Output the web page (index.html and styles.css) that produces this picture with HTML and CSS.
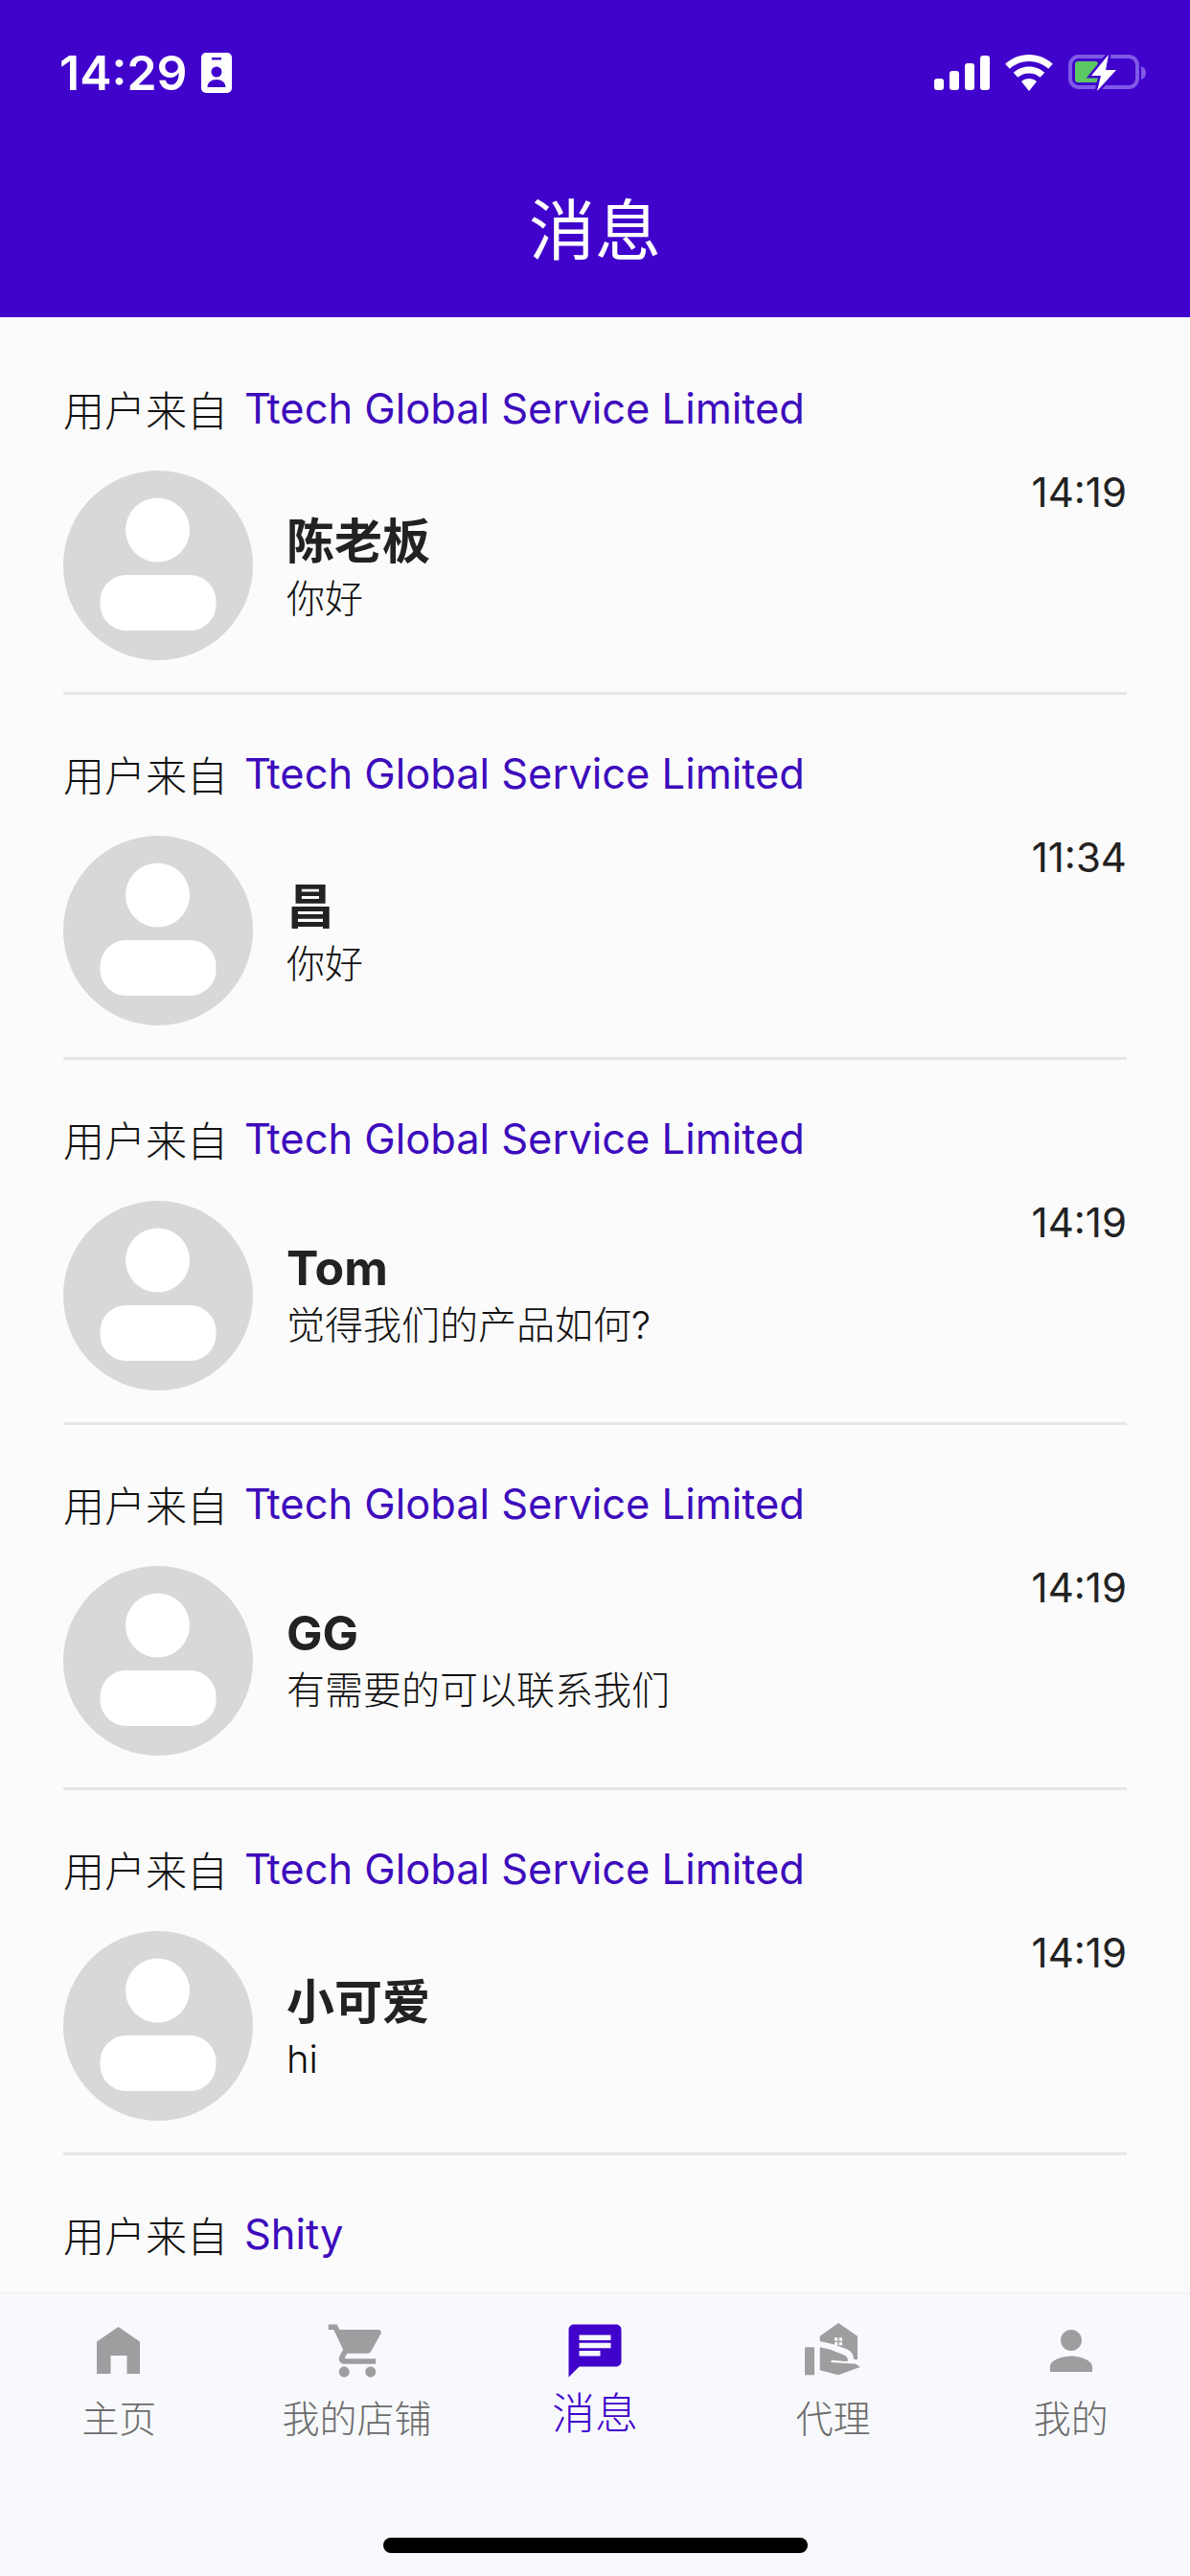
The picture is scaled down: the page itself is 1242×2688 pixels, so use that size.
FILE: index.html
```html
<!DOCTYPE html>
<html lang="zh-CN">
<head>
    <meta charset="UTF-8">
    <meta name="viewport" content="width=device-width, initial-scale=1.0">
    <title>消息</title>
    <link rel="stylesheet" href="styles.css">
</head>
<body>

<div class="app">
    <header class="top-bar">
        <div class="status-bar">
            <div class="status-left">
                <span class="clock">14:29</span>
                <svg class="badge-icon" viewBox="0 0 32 42">
                    <path fill="#fff" fill-rule="evenodd" d="M5 0h22a5 5 0 0 1 5 5v32a5 5 0 0 1-5 5H5a5 5 0 0 1-5-5V5a5 5 0 0 1 5-5zM11 5v2.500h10V5zM16 14.500a5.500 5.500 0 1 0 0 11a5.500 5.500 0 0 0 0-11zM6.500 36h19c0-5-4-8-9.500-8s-9.500 3-9.500 8z"/>
                </svg>
            </div>
            <div class="status-right">
                <svg class="signal-icon" viewBox="0 0 58 36">
                    <rect x="0" y="24" width="10" height="12" rx="3" fill="#fff"/>
                    <rect x="16" y="16" width="10" height="20" rx="3" fill="#fff"/>
                    <rect x="32" y="8" width="10" height="28" rx="3" fill="#fff"/>
                    <rect x="48" y="0" width="10" height="36" rx="3" fill="#fff"/>
                </svg>
                <svg class="wifi-icon" viewBox="0 0 50 38">
                    <path fill="#fff" d="M25 0c9.500 0 18.200 3.700 24.800 9.700l-4.600 5C39.800 9.900 32.800 7 25 7S10.200 9.900 4.800 14.700l-4.600-5C6.800 3.700 15.500 0 25 0z"/>
                    <path fill="#fff" d="M25 12.500c6.300 0 12 2.400 16.300 6.300l-4.700 5C33.500 21 29.400 19.500 25 19.500s-8.500 1.500-11.600 4.300l-4.700-5c4.300-3.900 10-6.300 16.300-6.300z"/>
                    <path fill="#fff" d="M25 25c3.100 0 5.900 1.100 8 3L25 38l-8-10c2.100-1.900 4.900-3 8-3z"/>
                </svg>
                <svg class="battery-icon" viewBox="0 0 82 38">
                    <rect x="2" y="2" width="70" height="32" rx="9" fill="none" stroke="#7f5ae6" stroke-width="4"/>
                    <path d="M76 12c3 1 5 3.500 5 7s-2 6-5 7z" fill="#7f5ae6"/>
                    <rect x="7" y="7" width="24" height="22" rx="3" fill="#5cc864"/>
                    <path class="battery-bolt" d="M42 0L24 22h10l-4 16 20-22H39z"/>
                </svg>
            </div>
        </div>
        <h1 class="page-title">消息</h1>
    </header>

    <main class="message-list">
        <div class="message">
            <div class="source">用户来自 <span class="company">Ttech Global Service Limited</span></div>
            <div class="message-row">
                <svg class="avatar" viewBox="0 0 198 198">
                    <circle cx="99" cy="99" r="99" fill="#d8d8d8"/>
                    <circle cx="98.500" cy="62" r="33.500" fill="#fff"/>
                    <rect x="38.500" y="109" width="121" height="58" rx="27" fill="#fff"/>
                </svg>
                <div class="message-text text-cjk">
                    <div class="sender">陈老板</div>
                    <div class="preview">你好</div>
                </div>
                <div class="time">14:19</div>
            </div>
        </div>

        <div class="message">
            <div class="source">用户来自 <span class="company">Ttech Global Service Limited</span></div>
            <div class="message-row">
                <svg class="avatar" viewBox="0 0 198 198">
                    <circle cx="99" cy="99" r="99" fill="#d8d8d8"/>
                    <circle cx="98.500" cy="62" r="33.500" fill="#fff"/>
                    <rect x="38.500" y="109" width="121" height="58" rx="27" fill="#fff"/>
                </svg>
                <div class="message-text text-cjk">
                    <div class="sender">昌</div>
                    <div class="preview">你好</div>
                </div>
                <div class="time">11:34</div>
            </div>
        </div>

        <div class="message">
            <div class="source">用户来自 <span class="company">Ttech Global Service Limited</span></div>
            <div class="message-row">
                <svg class="avatar" viewBox="0 0 198 198">
                    <circle cx="99" cy="99" r="99" fill="#d8d8d8"/>
                    <circle cx="98.500" cy="62" r="33.500" fill="#fff"/>
                    <rect x="38.500" y="109" width="121" height="58" rx="27" fill="#fff"/>
                </svg>
                <div class="message-text">
                    <div class="sender">Tom</div>
                    <div class="preview">觉得我们的产品如何?</div>
                </div>
                <div class="time">14:19</div>
            </div>
        </div>

        <div class="message">
            <div class="source">用户来自 <span class="company">Ttech Global Service Limited</span></div>
            <div class="message-row">
                <svg class="avatar" viewBox="0 0 198 198">
                    <circle cx="99" cy="99" r="99" fill="#d8d8d8"/>
                    <circle cx="98.500" cy="62" r="33.500" fill="#fff"/>
                    <rect x="38.500" y="109" width="121" height="58" rx="27" fill="#fff"/>
                </svg>
                <div class="message-text">
                    <div class="sender">GG</div>
                    <div class="preview">有需要的可以联系我们</div>
                </div>
                <div class="time">14:19</div>
            </div>
        </div>

        <div class="message">
            <div class="source">用户来自 <span class="company">Ttech Global Service Limited</span></div>
            <div class="message-row">
                <svg class="avatar" viewBox="0 0 198 198">
                    <circle cx="99" cy="99" r="99" fill="#d8d8d8"/>
                    <circle cx="98.500" cy="62" r="33.500" fill="#fff"/>
                    <rect x="38.500" y="109" width="121" height="58" rx="27" fill="#fff"/>
                </svg>
                <div class="message-text text-cjk">
                    <div class="sender">小可爱</div>
                    <div class="preview">hi</div>
                </div>
                <div class="time">14:19</div>
            </div>
        </div>

        <div class="message">
            <div class="source">用户来自 <span class="company">Shity</span></div>
        </div>
    </main>

    <nav class="tab-bar">
        <div class="tabs">
            <div class="tab">
                <svg class="tab-icon" viewBox="0 0 66 66">
                    <path fill="#9d9e9f" d="M32.500 8L55 23.500V57H41.500V38H24.500V57H10V23.500z"/>
                </svg>
                <span class="tab-label">主页</span>
            </div>
            <div class="tab">
                <svg class="tab-icon" viewBox="0 0 24 24">
                    <path fill="#9d9e9f" d="M7 18c-1.100 0-1.990.9-1.990 2S5.900 22 7 22s2-.9 2-2-.9-2-2-2zM1 2v2h2l3.600 7.590-1.350 2.450c-.16.28-.25.61-.25.96 0 1.100.9 2 2 2h12v-2H7.420c-.14 0-.25-.11-.25-.25l.03-.12.9-1.630h7.450c.75 0 1.410-.41 1.750-1.030l3.580-6.470c.08-.14.12-.31.12-.48 0-.55-.45-1-1-1H5.210l-.94-2H1zm16 16c-1.100 0-1.990.9-1.990 2s.89 2 1.990 2 2-.9 2-2-.9-2-2-2z"/>
                </svg>
                <span class="tab-label">我的店铺</span>
            </div>
            <div class="tab tab-active">
                <svg class="tab-icon" viewBox="0 0 24 24">
                    <path fill="#4003cc" d="M20 2H4c-1.100 0-1.990.9-1.990 2L2 22l4-4h14c1.100 0 2-.9 2-2V4c0-1.100-.9-2-2-2zM6 9h12v2H6V9zm8 5H6v-2h8v2zm4-6H6V6h12v2z"/>
                </svg>
                <span class="tab-label">消息</span>
            </div>
            <div class="tab">
                <svg class="tab-icon" viewBox="0 0 66 66">
                    <!-- post, roof with window dots, open hand under it -->
                    <rect x="4" y="29.300" width="10" height="29" fill="#9d9e9f"/>
                    <path fill="#9d9e9f" d="M39 4L59 17.700V42H55C55 36 52 33 47 31L33 26L19.700 23V17.700z"/>
                    <path fill="#9d9e9f" d="M19.700 29.300L30.700 31.700L45.700 37.700C49 39.500 49.500 43 48.300 44.300L32.300 42.700L30.700 45L57.300 46.700L61.700 50L39 58.300L19.700 53.300z"/>
                    <path fill="#f8f9fc" d="M35 19.300h3.300v3.400H35zM39.700 19.300H43v3.400h-3.300zM35 24h3.300v3.300H35zM39.700 24H43v3.300h-3.300z"/>
                </svg>
                <span class="tab-label">代理</span>
            </div>
            <div class="tab">
                <svg class="tab-icon" viewBox="0 0 24 24">
                    <path fill="#9d9e9f" d="M12 12c2.210 0 4-1.790 4-4s-1.790-4-4-4-4 1.790-4 4 1.790 4 4 4zm0 2c-2.670 0-8 1.340-8 4v2h16v-2c0-2.660-5.330-4-8-4z"/>
                </svg>
                <span class="tab-label">我的</span>
            </div>
        </div>
        <div class="home-indicator"></div>
    </nav>
</div>

</body>
</html>
```

FILE: styles.css
```css
* {
    box-sizing: border-box;
}
body {
    margin: 0;
    font-family: Inter, "Noto Sans CJK SC", sans-serif;
    background-color: #fbfbfb;
    color: #222;
}
.app {
    display: flex;
    flex-direction: column;
    height: 2688px;
    overflow: hidden;
}

/* purple header with the phone status row */
.top-bar {
    height: 331px;
    flex-shrink: 0;
    background-color: #4003cc;
    color: #fff;
    padding-top: 48px;
}
.status-bar {
    display: flex;
    justify-content: space-between;
    align-items: center;
    padding: 0 45px 0 62px;
    height: 56px;
}
.status-left {
    display: flex;
    align-items: center;
    gap: 14px;
}
.clock {
    font-size: 50px;
    font-weight: 600;
    line-height: 56px;
}
.badge-icon {
    width: 32px;
    height: 42px;
}
.status-right {
    display: flex;
    align-items: center;
    gap: 16px;
}
.signal-icon {
    width: 58px;
    height: 36px;
}
.wifi-icon {
    width: 50px;
    height: 38px;
}
.battery-icon {
    width: 82px;
    height: 38px;
}
.battery-bolt {
    fill: #fff;
    stroke: #4003cc;
    stroke-width: 5px;
    paint-order: stroke;
}
.page-title {
    margin: 92px 0 0;
    text-align: center;
    font-size: 69px;
    font-weight: 400;
    line-height: 90px;
}

/* message list */
.message-list {
    flex: 1;
    min-height: 0;
    overflow: hidden;
    padding: 13px 66px 0 66px;
}
.message {
    height: 381px;
    padding-top: 55px;
    border-bottom: 3px solid #e6e6e6;
}
.source {
    display: flex;
    align-items: center;
    gap: 17px;
    height: 59px;
    font-size: 43px;
    font-weight: 300;
    line-height: 56px;
    color: #111;
}
.company {
    font-size: 43.400px;
    font-weight: 400;
    margin-bottom: 6px;
    color: #3d0cbc;
}
.message-row {
    display: flex;
    align-items: flex-start;
    margin-top: 33px;
}
.avatar {
    width: 198px;
    height: 198px;
    flex-shrink: 0;
}
.message-text {
    flex: 1;
    margin-left: 35px;
    padding-top: 40px;
}
/* Chinese names sit a little lower than Latin ones */
.text-cjk {
    padding-top: 44px;
}
.sender {
    font-size: 50px;
    font-weight: 700;
    line-height: 60px;
}
.preview {
    font-size: 40px;
    font-weight: 300;
    line-height: 52px;
    margin-top: 4px;
    color: #111;
}
.time {
    font-size: 42px;
    font-weight: 400;
    line-height: 48px;
    margin-top: -1px;
    color: #222;
}

/* bottom tabs */
.tab-bar {
    height: 296px;
    flex-shrink: 0;
    background-color: #f8f9fc;
    border-top: 2px solid #f1f1f3;
    display: flex;
    flex-direction: column;
}
.tabs {
    display: flex;
    padding-top: 26px;
}
.tab {
    flex: 1;
    display: flex;
    flex-direction: column;
    align-items: center;
}
.tab-icon {
    width: 66px;
    height: 66px;
}
.tab-label {
    font-size: 39px;
    font-weight: 300;
    line-height: 52px;
    margin-top: 12px;
    color: #6c6c6c;
}
.tab-active .tab-label {
    font-size: 45px;
    margin-top: 7px;
    color: #4003cc;
}
.home-indicator {
    width: 443px;
    height: 16px;
    border-radius: 8px;
    background-color: #000;
    margin: auto auto 24px;
}
```
